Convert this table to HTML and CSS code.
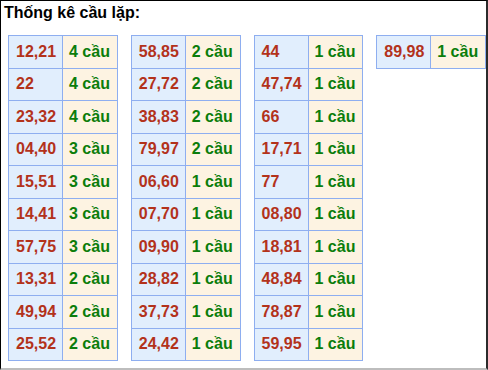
FILE: index.html
```html
<!DOCTYPE html>
<html lang="vi">
<head>
<meta charset="utf-8">
<title>Thống kê cầu lặp</title>
<link rel="stylesheet" href="styles.css">
</head>
<body>
<div class="frame">
  <h2 class="title">Thống kê cầu lặp:</h2>
  <div class="tables">
    <table class="stat">
      <tr><td class="num">12,21</td><td class="cnt">4 cầu</td></tr>
      <tr><td class="num">22</td><td class="cnt">4 cầu</td></tr>
      <tr><td class="num">23,32</td><td class="cnt">4 cầu</td></tr>
      <tr><td class="num">04,40</td><td class="cnt">3 cầu</td></tr>
      <tr><td class="num">15,51</td><td class="cnt">3 cầu</td></tr>
      <tr><td class="num">14,41</td><td class="cnt">3 cầu</td></tr>
      <tr><td class="num">57,75</td><td class="cnt">3 cầu</td></tr>
      <tr><td class="num">13,31</td><td class="cnt">2 cầu</td></tr>
      <tr><td class="num">49,94</td><td class="cnt">2 cầu</td></tr>
      <tr><td class="num">25,52</td><td class="cnt">2 cầu</td></tr>
    </table>
    <table class="stat">
      <tr><td class="num">58,85</td><td class="cnt">2 cầu</td></tr>
      <tr><td class="num">27,72</td><td class="cnt">2 cầu</td></tr>
      <tr><td class="num">38,83</td><td class="cnt">2 cầu</td></tr>
      <tr><td class="num">79,97</td><td class="cnt">2 cầu</td></tr>
      <tr><td class="num">06,60</td><td class="cnt">1 cầu</td></tr>
      <tr><td class="num">07,70</td><td class="cnt">1 cầu</td></tr>
      <tr><td class="num">09,90</td><td class="cnt">1 cầu</td></tr>
      <tr><td class="num">28,82</td><td class="cnt">1 cầu</td></tr>
      <tr><td class="num">37,73</td><td class="cnt">1 cầu</td></tr>
      <tr><td class="num">24,42</td><td class="cnt">1 cầu</td></tr>
    </table>
    <table class="stat">
      <tr><td class="num">44</td><td class="cnt">1 cầu</td></tr>
      <tr><td class="num">47,74</td><td class="cnt">1 cầu</td></tr>
      <tr><td class="num">66</td><td class="cnt">1 cầu</td></tr>
      <tr><td class="num">17,71</td><td class="cnt">1 cầu</td></tr>
      <tr><td class="num">77</td><td class="cnt">1 cầu</td></tr>
      <tr><td class="num">08,80</td><td class="cnt">1 cầu</td></tr>
      <tr><td class="num">18,81</td><td class="cnt">1 cầu</td></tr>
      <tr><td class="num">48,84</td><td class="cnt">1 cầu</td></tr>
      <tr><td class="num">78,87</td><td class="cnt">1 cầu</td></tr>
      <tr><td class="num">59,95</td><td class="cnt">1 cầu</td></tr>
    </table>
    <table class="stat">
      <tr><td class="num">89,98</td><td class="cnt">1 cầu</td></tr>
    </table>
  </div>
</div>
</body>
</html>
```
FILE: styles.css
```css
html, body {
  margin: 0;
  padding: 0;
  background: #ffffff;
}
.frame {
  box-sizing: border-box;
  width: 488px;
  height: 370px;
  border-top: 1px solid #000000;
  border-left: 1px solid #000000;
  border-right: 2px solid #2b2b2b;
  border-bottom: 2px solid #bdbdbd;
  padding: 3px 0 0 7px;
  font-family: "Liberation Sans", Arial, sans-serif;
  overflow: hidden;
}
.title {
  margin: 0 0 0 -4px;
  font-size: 16px;
  font-weight: bold;
  line-height: 18px;
  color: #000000;
}
.tables {
  display: flex;
  align-items: flex-start;
  gap: 13px;
  margin-top: 13px;
}
.stat {
  border-collapse: collapse;
  table-layout: fixed;
  width: 110px;
  font-size: 16px;
  font-weight: bold;
}
.stat tr {
  height: 32.5px;
}
.stat td {
  box-sizing: border-box;
  border: 1px solid #8eaef0;
  padding: 0 0 0 6px;
  line-height: 18px;
  vertical-align: middle;
  white-space: nowrap;
}
.stat td.num {
  width: 54px;
  background: #e1eefd;
  color: #b3321b;
  padding-left: 7px;
}
.stat td.cnt {
  background: #fdf3e2;
  color: #0b7d0b;
}
```
